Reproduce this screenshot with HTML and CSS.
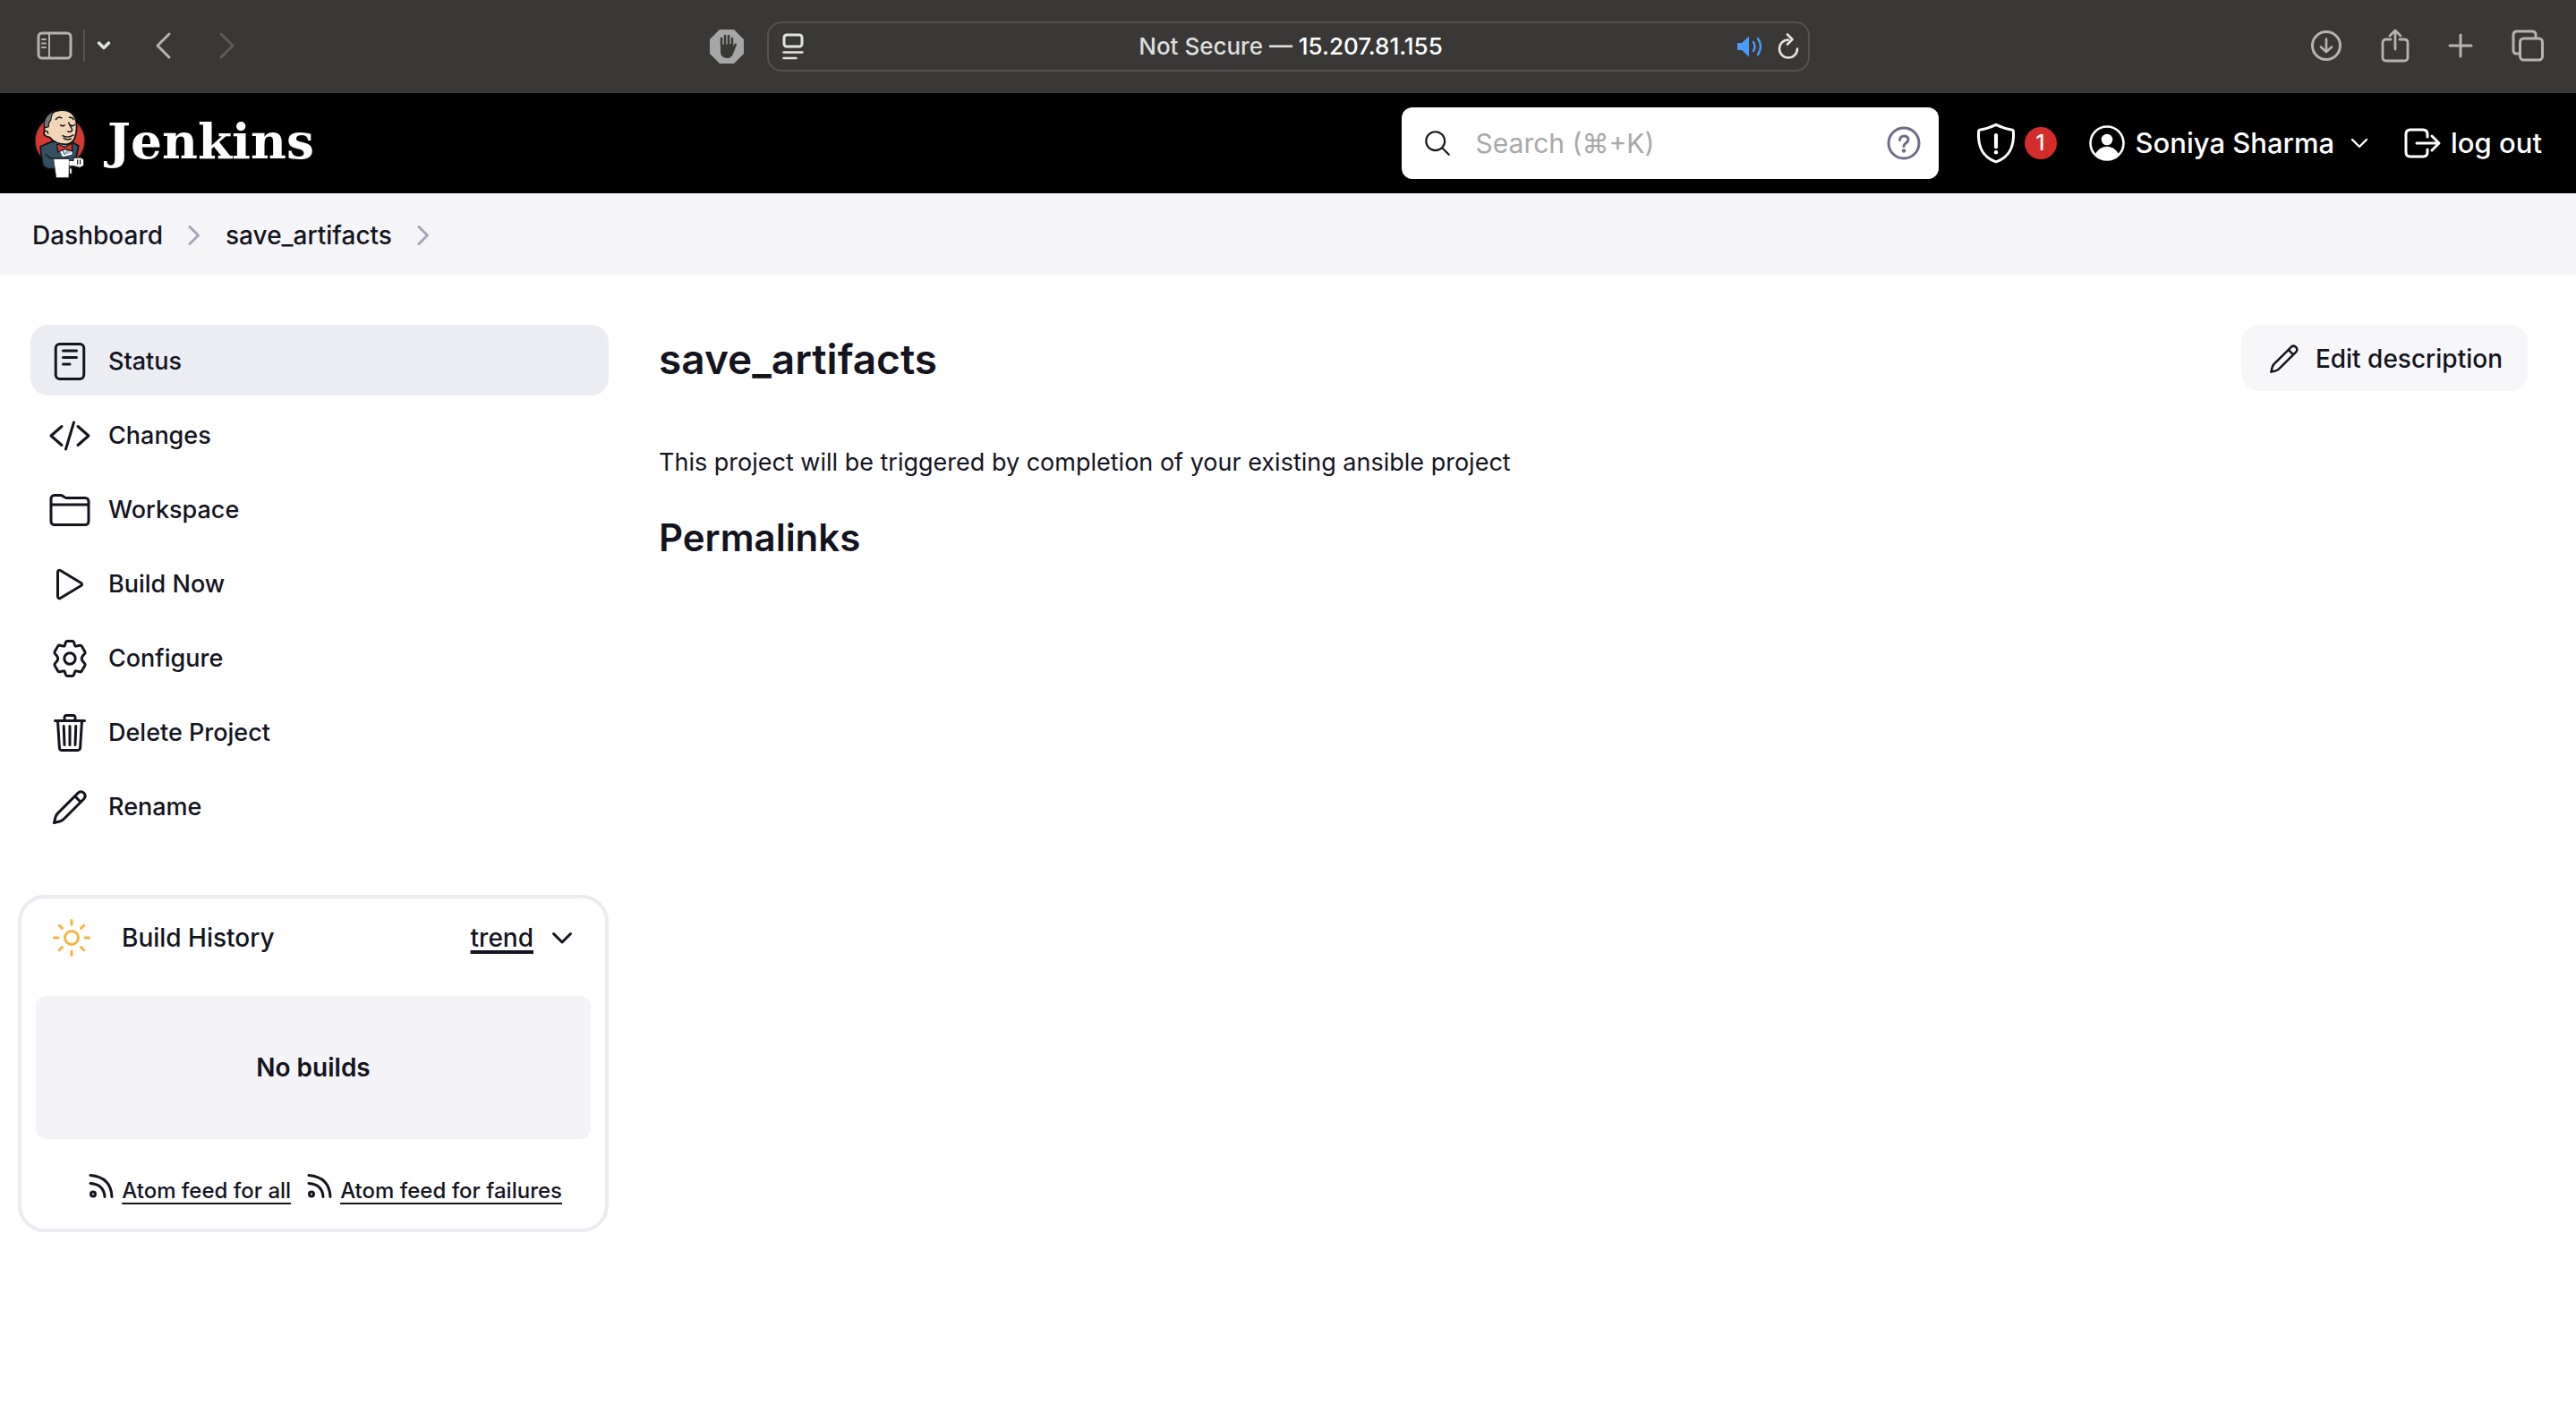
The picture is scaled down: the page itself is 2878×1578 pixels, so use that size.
FILE: index.html
```html
<!DOCTYPE html>
<html lang="en">
<head>
<meta charset="utf-8">
<title>save_artifacts [Jenkins]</title>
<link rel="stylesheet" href="styles.css">
</head>
<body>
<div class="browser">
  <div class="browser-side">
    <button class="tool" aria-label="Sidebar"><svg width="40" height="32" viewBox="0 0 40 32"><rect x="2" y="2" width="36" height="28" rx="4"/><path d="M14 2v28M6 9h4M6 13.500h4M6 18h4" stroke-width="2"/></svg></button>
    <span class="rule"></span>
    <button class="tool tool-bright" aria-label="Tab groups"><svg width="16" height="12" viewBox="0 0 16 12"><path d="M2.500 3L8 8.500L13.500 3" stroke-width="3.400"/></svg></button>
    <button class="tool tool-back" aria-label="Back"><svg width="20" height="32" viewBox="0 0 20 32"><path d="M17 3L4 16L17 29" stroke-width="3"/></svg></button>
    <button class="tool tool-next" aria-label="Forward"><svg width="20" height="32" viewBox="0 0 20 32"><path d="M3 3L16 16L3 29" stroke-width="3"/></svg></button>
  </div>
  <div class="browser-mid">
    <button class="tool" aria-label="Content blocker"><svg width="38" height="38" viewBox="0 0 38 38"><path d="M11 0h16l11 11v16l-11 11h-16l-11-11v-16z" fill="#a6a6a6" stroke="none"/><path d="M13 18v-8M17 17v-10M21 17v-10M25 19v-9" stroke="#393836" stroke-width="2.600"/><path d="M12 17v8c0 4 3 7 7 7c4 0 6-2 7.500-6l3.500-9c0-2-2-2-3 0l-1.500 3h-1v-4z" fill="#393836" stroke="none"/></svg></button>
    <div class="address">
      <svg class="bright" width="24" height="30" viewBox="0 0 24 30"><rect x="2" y="2" width="20" height="13" rx="3"/><path d="M1.500 21.500h21M1.500 28h14" stroke-width="2.500"/></svg>
      <span class="address-text">Not Secure — <b>15.207.81.155</b></span>
      <span class="address-tools">
        <svg class="sound" width="30" height="26" viewBox="0 0 30 26"><path d="M1 9h5l8-7.500v23l-8-7.500h-5z" fill="#4b9cf8" stroke="none"/><path d="M19 8q3 5 0 10M24 4q6 9 0 18" stroke-width="2.400"/></svg>
        <svg class="bright" width="24" height="30" viewBox="0 0 24 30"><path d="M12 7.500a10 10 0 1 0 10 10M11 1.500l5.500 5.500l-5.500 5.500" stroke-width="2.600"/></svg>
      </span>
    </div>
  </div>
  <div class="browser-end">
    <button class="tool" aria-label="Downloads"><svg width="36" height="36" viewBox="0 0 36 36"><circle cx="18" cy="18" r="15.500"/><path d="M18 10.500v14.500M12 19.500l6 5.500l6-5.500" stroke-width="2.600"/></svg></button>
    <button class="tool" aria-label="Share"><svg width="32" height="38" viewBox="0 0 32 38"><path d="M11 12h-5q-4 0-4 4v16q0 4 4 4h20q4 0 4-4v-16q0-4-4-4h-5M16 23v-20.500M10 8l6-6l6 6" stroke-width="2.800"/></svg></button>
    <button class="tool" aria-label="New tab"><svg width="28" height="28" viewBox="0 0 28 28"><path d="M14 2v24M2 14h24"/></svg></button>
    <button class="tool" aria-label="Tabs"><svg width="36" height="36" viewBox="0 0 36 36"><rect x="9.500" y="10" width="25" height="24" rx="4"/><path d="M9 27h-3q-4 0-4-4v-17q0-4 4-4h17q4 0 4 4v3"/></svg></button>
  </div>
</div>

<header class="header">
  <a class="logo" href="#">
    <svg width="58" height="77" viewBox="0 0 100 133"><circle cx="50" cy="61" r="48" fill="#d33833" stroke="#222" stroke-width="2"/><path d="M12 72l24-10h35l15 9l-5 24l-10 20h-45l-9-6l-3-20z" fill="#335061" stroke="#111" stroke-width="3"/><path d="M44 66l12 24l16-4l-2-18z" fill="#9fc4dc"/><path d="M55 72l4 16l8-14z" fill="#fff" stroke="#222" stroke-width="1"/><path d="M20 42c-2-24 10-38 32-40c22-1 31 14 30 34c-1 20-6 30-19 32c-12 0-26-4-33-14c-8 0-13-6-10-12z" fill="#f0d6b7" stroke="#111" stroke-width="3"/><path d="M20 36c-3-16 6-28 20-32c-9 7-6 12-8 18c-3 2-4 8-4 12z" fill="#777" stroke="#111" stroke-width="2"/><path d="M42 20q5-7 11-3M68 16q6-1 8 4M51 31q4 3 8 0M71 31q4 3 7-1M67 26c1 6 9 13 6 16q-3 3-8 1M55 51q10 6 21-1M57 56q7 5 14 1M21 43q5-3 6 4" fill="none" stroke="#111" stroke-width="2.500"/><path d="M44 67l15 6l14-7l1 15l-14-4l-14 6z" fill="#d33833" stroke="#111" stroke-width="2"/><path d="M38 96h30l-1 36h-24z" fill="#fff" stroke="#333" stroke-width="1"/><path d="M68 99h8v-5l14-1l6 4v12l-8 4l-12-3h-8M69 114h4v11h-4" fill="#fff" stroke="#222" stroke-width="2"/><path d="M22 87l10 8h36M84 98v8M89 98v8" fill="none" stroke="#111" stroke-width="2"/></svg>
    <span>Jenkins</span>
  </a>
  <div class="header-tools">
    <div class="search">
      <svg class="search-icon" width="34" height="34" viewBox="0 0 512 512"><path d="M221 64a157 157 0 1 0 157 157A157 157 0 0 0 221 64zM338 338l110 110"/></svg>
      <input type="text" aria-label="Search" placeholder="Search (⌘+K)">
      <a class="help" href="#" aria-label="Help"><svg width="38" height="38" viewBox="0 0 38 38"><circle cx="19" cy="19" r="17" stroke-width="3"/><path d="M14.500 15.500c0-6 9.500-6 9.500-.5c0 4-5 3.500-5 7.500" stroke-width="3"/><circle cx="19" cy="27.500" r="2.200" fill="#6d6d88" stroke="none"/></svg></a>
    </div>
    <a class="alert" href="#"><svg width="48" height="48" viewBox="0 0 512 512"><path d="M463 112c-1-8-6-12-12-14C380 88 335 74 256 36C177 74 132 88 61 98c-7 1-11 6-12 14C33 340 130 430 248 476q8 3 16 0C382 430 479 340 463 112z"/><path d="M256 160v140" stroke-width="44"/><circle cx="256" cy="366" r="24" fill="#fff" stroke="none"/></svg><span class="badge">1</span></a>
    <a class="user" href="#"><svg width="44" height="44" viewBox="0 0 44 44"><circle cx="22" cy="22" r="18.500" stroke-width="2.600"/><circle cx="22" cy="18" r="6.300" fill="#fff" stroke="none"/><path d="M9 34c6-11 20-11 26 0q-13 12-26 0z" fill="#fff" stroke="none"/></svg>Soniya Sharma<svg class="user-chevron" width="24" height="24" viewBox="0 0 24 24"><path d="M4 8l8 8l8-8" stroke-width="2.400"/></svg></a>
    <a class="logout" href="#"><svg width="44" height="44" viewBox="0 0 44 44"><path d="M28 15v-3q0-5-5-5h-14q-5 0-5 5v20q0 5 5 5h14q5 0 5-5v-3M16 22h25M33 14l8 8l-8 8" stroke-width="3"/></svg>log out</a>
  </div>
</header>

<nav class="crumbs" aria-label="Breadcrumb">
  <a href="#">Dashboard</a>
  <svg width="16" height="24" viewBox="0 0 16 24"><path d="M3 2.500L12.500 12L3 21.500"/></svg>
  <a href="#">save_artifacts</a>
  <svg width="16" height="24" viewBox="0 0 16 24"><path d="M3 2.500L12.500 12L3 21.500"/></svg>
</nav>

<div class="page">
  <aside class="side">
    <nav class="tasks">
      <a class="task task-on" href="#"><svg viewBox="0 0 512 512"><rect x="88" y="48" width="336" height="416" rx="48"/><path d="M176 128h160M176 208h160M176 288h80"/></svg>Status</a>
      <a class="task" href="#"><svg viewBox="0 0 512 512"><path d="M160 368L32 256l128-112M352 368l128-112-128-112M304 96l-96 320"/></svg>Changes</a>
      <a class="task" href="#"><svg viewBox="0 0 512 512"><path d="M440 432H72a40 40 0 0 1-40-40V120a40 40 0 0 1 40-40h75.900a40 40 0 0 1 22.200 6.700l27.800 18.600a40 40 0 0 0 22.200 6.700H440a40 40 0 0 1 40 40v240a40 40 0 0 1-40 40zM32 192h448"/></svg>Workspace</a>
      <a class="task" href="#"><svg viewBox="0 0 512 512"><path d="M112 111v290c0 17.400 17 28.500 31 20.200l247.600-148.400c12.500-7.500 12.500-26.100 0-33.600L143 90.800c-14-8.300-31 2.800-31 20.200z"/></svg>Build Now</a>
      <a class="task" href="#"><svg viewBox="0 0 512 512"><circle cx="256" cy="256" r="66"/><path d="M226 48h60q14 0 18 14l12 36q4 12 16 10l44-10q14-3 22 10l38 66q6 12-2 22l-26 30q-10 10-10 30t10 30l26 30q8 10 2 22l-38 66q-8 13-22 10l-44-10q-12-2-16 10l-12 36q-4 14-18 14h-60q-14 0-18-14l-12-36q-4-12-16-10l-44 10q-14 3-22-10l-38-66q-6-12 2-22l26-30q10-10 10-30t-10-30l-26-30q-8-10-2-22l38-66q8-13 22-10l44 10q12 2 16-10l12-36q4-14 18-14z"/></svg>Configure</a>
      <a class="task" href="#"><svg viewBox="0 0 512 512"><path d="M112 112l20 320c1 18.500 14.500 32 32 32h184c17.700 0 30.700-13.500 32-32l20-320M80 112h352M192 112V72a23.900 23.900 0 0 1 24-24h80a23.900 23.900 0 0 1 24 24v40M256 176v224M184 176l8 224M328 176l-8 224"/></svg>Delete Project</a>
      <a class="task" href="#"><svg viewBox="0 0 512 512"><path d="M358 84a50 50 0 0 1 70 70L180 402Q160 420 135 427L69 443L85 377Q92 352 110 332zM316 126l70 70"/></svg>Rename</a>
    </nav>
    <section class="history">
      <div class="history-head">
        <svg class="sun" width="48" height="48" viewBox="0 0 512 512"><path d="M256 48v48M256 416v48M403 109l-34 34M143 369l-34 34M464 256h-48M96 256H48M403 403l-34-34M143 143l-34-34"/><circle cx="256" cy="256" r="80"/></svg>
        <span>Build History</span>
        <a class="trend" href="#">trend</a>
        <svg width="32" height="32" viewBox="0 0 32 32"><path d="M6.500 11.500l9.500 9.500l9.500-9.500" stroke-width="3"/></svg>
      </div>
      <div class="empty">No builds</div>
      <div class="feeds">
        <a href="#"><svg width="28" height="28" viewBox="0 0 28 28"><circle cx="5" cy="23.500" r="2.500"/><path d="M2 11.500q15 1 16 15M2 2.500q23 2 24 24"/></svg><span>Atom feed for all</span></a>
        <a href="#"><svg width="28" height="28" viewBox="0 0 28 28"><circle cx="5" cy="23.500" r="2.500"/><path d="M2 11.500q15 1 16 15M2 2.500q23 2 24 24"/></svg><span>Atom feed for failures</span></a>
      </div>
    </section>
  </aside>
  <main class="main">
    <div class="title-row">
      <h1>save_artifacts</h1>
      <button class="edit"><svg width="40" height="40" viewBox="0 0 512 512"><path d="M358 84a50 50 0 0 1 70 70L180 402Q160 420 135 427L69 443L85 377Q92 352 110 332zM316 126l70 70"/></svg>Edit description</button>
    </div>
    <p>This project will be triggered by completion of your existing ansible project</p>
    <h2>Permalinks</h2>
  </main>
</div>
</body>
</html>
```
FILE: styles.css
```css
* { box-sizing: border-box; }

body {
  margin: 0;
  background: #fff;
  color: #14141f;
  font: 500 28px/40px Inter, "Liberation Sans", sans-serif;
}

a { color: inherit; text-decoration: none; }

button {
  border: 0;
  padding: 0;
  background: none;
  color: inherit;
  font: inherit;
}

svg {
  flex: none;
  display: block;
  fill: none;
  stroke: currentColor;
  stroke-width: 3;
  stroke-linecap: round;
  stroke-linejoin: round;
}

svg[viewBox="0 0 512 512"] { stroke-width: 32; }

/* Browser toolbar */
.browser {
  display: grid;
  grid-template-columns: 793px minmax(0, 1fr) 856px;
  align-items: center;
  height: 104px;
  background: #393836;
  color: #b4b3b2;
}

.browser-side { display: flex; align-items: center; padding: 0 0 2px 41px; }
.rule { width: 2px; height: 36px; margin: 0 13px 0 12px; background: #535250; }
.bright, .tool-bright { color: #e3e3e2; }
.sound { color: #4b9cf8; }
.tool-back { margin-left: 48px; }
.tool-next { margin-left: 52px; color: #5e5d5b; }

.browser-mid { display: flex; align-items: center; gap: 26px; }

.address {
  flex: 1;
  display: grid;
  grid-template-columns: 80px 1fr 80px;
  align-items: center;
  height: 56px;
  padding: 0 10px 0 15px;
  border: 2px solid #545351;
  border-radius: 16px;
}

.address-text { text-align: center; font-size: 26px; color: #dededd; }
.address-text b { color: #fff; font-weight: 500; }
.address-tools { display: flex; align-items: center; justify-content: flex-end; gap: 16px; }

.browser-end {
  display: flex;
  align-items: center;
  justify-content: flex-end;
  gap: 43px;
  padding: 0 36px 2px 0;
}

/* Jenkins header */
.header {
  display: flex;
  align-items: center;
  justify-content: space-between;
  height: 112px;
  padding: 0 38px;
  background: #000;
  color: #fff;
  font-size: 31px;
}

.logo {
  display: flex;
  align-items: center;
  gap: 24px;
  font: bold 55px/64px "DejaVu Serif", serif;
}

.logo span { padding-bottom: 4px; }

.header-tools { display: flex; align-items: center; }

.search {
  display: flex;
  align-items: center;
  width: 600px;
  height: 80px;
  padding: 0 20px 0 23px;
  border-radius: 12px;
  background: #fff;
}

.search-icon { color: #14141f; }

.search input {
  flex: 1;
  min-width: 0;
  margin-left: 26px;
  padding: 0;
  border: 0;
  outline: 0;
  background: none;
  color: #14141f;
  font: 400 30px/40px Inter, "DejaVu Sans", sans-serif;
}

.search input::placeholder { color: #a9a9a9; opacity: 1; }
.help { color: #6d6d88; }

.alert { display: flex; align-items: center; gap: 8px; margin-left: 40px; }

.badge {
  width: 36px;
  height: 36px;
  border-radius: 18px;
  background: #d42c2c;
  text-align: center;
  font-size: 24px;
  line-height: 36px;
}

.user { display: flex; align-items: center; gap: 10px; margin-left: 34px; }
.user-chevron { margin-left: 6px; }
.logout { display: flex; align-items: center; gap: 10px; margin-left: 36px; }

/* Breadcrumbs */
.crumbs {
  display: flex;
  align-items: center;
  gap: 27px;
  height: 91px;
  padding: 2px 36px 0;
  background: #f5f5f8;
}

.crumbs svg { color: #a6a5b8; }

/* Page */
.page { display: flex; gap: 56px; padding: 56px 54px 0 20px; }
.side { flex: none; width: 660px; }
.tasks { display: grid; gap: 4px; padding-left: 14px; }

.task {
  display: flex;
  align-items: center;
  gap: 19px;
  height: 79px;
  padding: 3px 20px 0;
  border-radius: 20px;
  font-size: 27px;
}

.task svg { width: 48px; height: 48px; }
.task-on { background: #ecedf3; }

.history {
  margin-top: 60px;
  padding: 24px 16px 22px;
  border: 4px solid #ebebf2;
  border-radius: 30px;
}

.history-head { display: flex; align-items: center; height: 40px; padding: 0 16px; }
.sun { color: #f5b541; margin-right: 32px; }

.trend {
  margin: 0 16px 0 auto;
  text-decoration: underline;
  text-decoration-thickness: 4px;
  text-underline-offset: 4px;
}

.empty {
  margin-top: 45px;
  padding: 60px 0;
  border-radius: 12px;
  background: #f3f3f8;
  text-align: center;
  font-weight: 600;
}

.feeds {
  display: flex;
  justify-content: flex-end;
  gap: 18px;
  margin-top: 38px;
  padding-right: 32px;
  font-size: 24px;
}

.feeds a { display: flex; gap: 9px; }

.feeds span {
  text-decoration: underline;
  text-decoration-thickness: 2px;
  text-underline-offset: 5px;
}

.main { flex: 1; min-width: 0; }
.title-row { display: flex; align-items: center; justify-content: space-between; }
h1 { margin: 0; padding-top: 2px; font-size: 46px; line-height: 72px; font-weight: 600; }
h2 { margin: 36px 0 0; font-size: 42px; line-height: 56px; font-weight: 600; }
p { margin: 60px 0 0; font-size: 27px; font-weight: 400; }

.edit {
  display: flex;
  align-items: center;
  gap: 15px;
  height: 74px;
  padding: 2px 28px 0;
  border-radius: 20px;
  background: #f7f7f9;
}
```
